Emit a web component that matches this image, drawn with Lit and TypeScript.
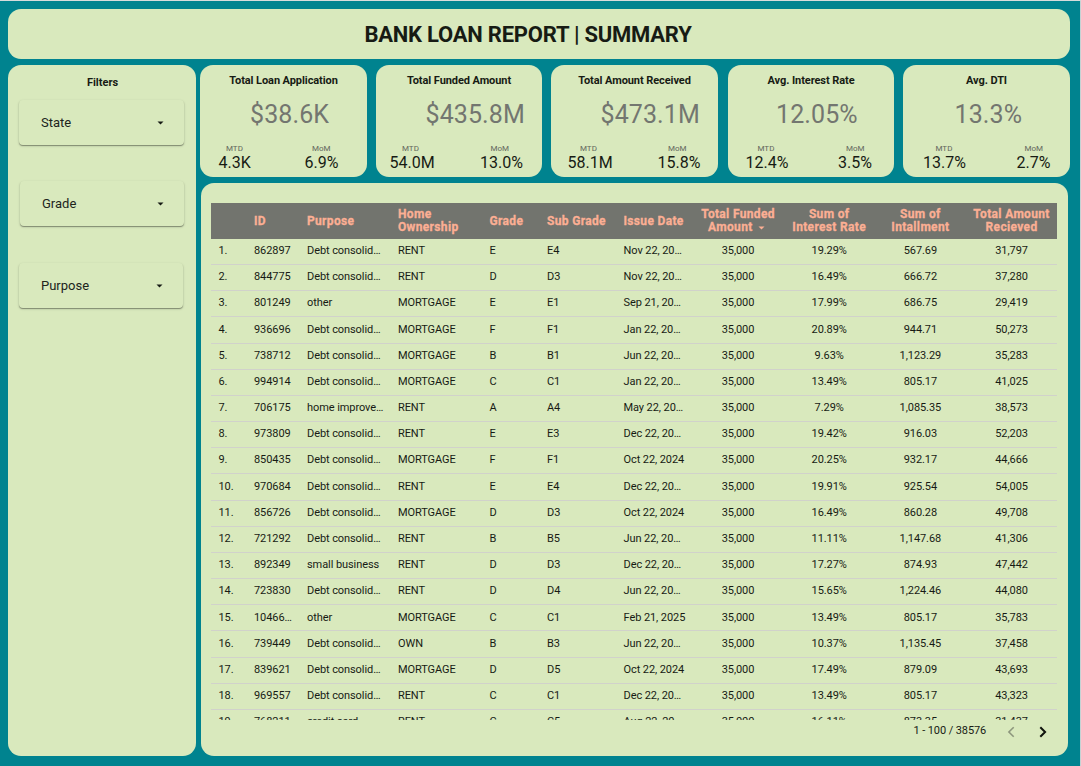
import { LitElement, html, css } from "lit";
import { customElement, property } from "lit/decorators.js";

type Kpi = { key: string; title: string; value: string; mtd: string; mom: string };

const KPIS: Kpi[] = [
  { key: "applications", title: "Total Loan Application", value: "$38.6K", mtd: "4.3K", mom: "6.9%" },
  { key: "funded", title: "Total Funded Amount", value: "$435.8M", mtd: "54.0M", mom: "13.0%" },
  { key: "received", title: "Total Amount Received", value: "$473.1M", mtd: "58.1M", mom: "15.8%" },
  { key: "interest", title: "Avg. Interest Rate", value: "12.05%", mtd: "12.4%", mom: "3.5%" },
  { key: "dti", title: "Avg. DTI", value: "13.3%", mtd: "13.7%", mom: "2.7%" },
];

const ROWS: string[][] = [
  ["862897", "Debt consolid…", "RENT", "E", "E4", "Nov 22, 20…", "35,000", "19.29%", "567.69", "31,797"],
  ["844775", "Debt consolid…", "RENT", "D", "D3", "Nov 22, 20…", "35,000", "16.49%", "666.72", "37,280"],
  ["801249", "other", "MORTGAGE", "E", "E1", "Sep 21, 20…", "35,000", "17.99%", "686.75", "29,419"],
  ["936696", "Debt consolid…", "MORTGAGE", "F", "F1", "Jan 22, 20…", "35,000", "20.89%", "944.71", "50,273"],
  ["738712", "Debt consolid…", "MORTGAGE", "B", "B1", "Jun 22, 20…", "35,000", "9.63%", "1,123.29", "35,283"],
  ["994914", "Debt consolid…", "MORTGAGE", "C", "C1", "Jan 22, 20…", "35,000", "13.49%", "805.17", "41,025"],
  ["706175", "home improve…", "RENT", "A", "A4", "May 22, 20…", "35,000", "7.29%", "1,085.35", "38,573"],
  ["973809", "Debt consolid…", "RENT", "E", "E3", "Dec 22, 20…", "35,000", "19.42%", "916.03", "52,203"],
  ["850435", "Debt consolid…", "MORTGAGE", "F", "F1", "Oct 22, 2024", "35,000", "20.25%", "932.17", "44,666"],
  ["970684", "Debt consolid…", "RENT", "E", "E4", "Dec 22, 20…", "35,000", "19.91%", "925.54", "54,005"],
  ["856726", "Debt consolid…", "MORTGAGE", "D", "D3", "Oct 22, 2024", "35,000", "16.49%", "860.28", "49,708"],
  ["721292", "Debt consolid…", "RENT", "B", "B5", "Jun 22, 20…", "35,000", "11.11%", "1,147.68", "41,306"],
  ["892349", "small business", "RENT", "D", "D3", "Dec 22, 20…", "35,000", "17.27%", "874.93", "47,442"],
  ["723830", "Debt consolid…", "RENT", "D", "D4", "Jun 22, 20…", "35,000", "15.65%", "1,224.46", "44,080"],
  ["10466…", "other", "MORTGAGE", "C", "C1", "Feb 21, 2025", "35,000", "13.49%", "805.17", "35,783"],
  ["739449", "Debt consolid…", "OWN", "B", "B3", "Jun 22, 20…", "35,000", "10.37%", "1,135.45", "37,458"],
  ["839621", "Debt consolid…", "MORTGAGE", "D", "D5", "Oct 22, 2024", "35,000", "17.49%", "879.09", "43,693"],
  ["969557", "Debt consolid…", "RENT", "C", "C1", "Dec 22, 20…", "35,000", "13.49%", "805.17", "43,323"],
  ["768211", "credit card", "RENT", "C", "C5", "Aug 22, 20…", "35,000", "16.11%", "873.35", "31,437"],
];

@customElement("kpi-card")
export class KpiCard extends LitElement {
  @property({ attribute: false }) kpi!: Kpi;

  static styles = css`
    :host { display: block; height: 112px; border-radius: 13px; background: #d9e9bd; color: #171b14; white-space: nowrap; }
    .title { padding-top: 9px; text-align: center; font-size: 11px; line-height: 14px; font-weight: 700; letter-spacing: -0.08px; }
    .value { padding: 12px 0 0 var(--value-x); font-size: 25px; line-height: 30px; color: #737670; letter-spacing: 0.1px; }
    .pair { display: grid; grid-template-columns: var(--split) 1fr; padding: 13px 0 0 var(--mtd-x); }
    .label { font-size: 8px; line-height: 11px; color: #62665c; padding-left: var(--label-x); }
    .label.mom { padding-left: var(--mom-label-x); }
    .num { font-size: 16px; line-height: 17px; }
  `;

  render() {
    const k = this.kpi;
    return html`
      <div class="title">${k.title}</div>
      <div class="value">${k.value}</div>
      <div class="pair">
        <div class="label">MTD</div><div class="label mom">MoM</div>
        <div class="num">${k.mtd}</div><div class="num">${k.mom}</div>
      </div>`;
  }
}

@customElement("filter-select")
export class FilterSelect extends LitElement {
  @property() label = "";

  static styles = css`
    :host {
      display: flex; align-items: center; justify-content: space-between; box-sizing: border-box;
      height: 45px; padding: 0 20px 0 22px; border-radius: 4px; background: #d9e9bd; color: #20241c; font-size: 13px;
      box-shadow: 0 1px 1px rgba(0, 0, 0, 0.34), 0 1px 3px rgba(0, 0, 0, 0.14);
    }
    .arrow { display: block; width: 7px; height: 4px; }
  `;

  render() {
    return html`<span>${this.label}</span>
      <svg class="arrow" viewBox="0 0 7 4"><path d="M.5.5h6l-3 3z" fill="#171b14" /></svg>`;
  }
}

@customElement("loan-table")
export class LoanTable extends LitElement {
  static styles = css`
    :host { display: block; color: #171b14; }
    .row, .head {
      display: grid; align-items: center; white-space: nowrap;
      grid-template-columns: 35.5px 53px 91px 91.5px 57.5px 76.5px 76.4px 91.2px 91.2px 91.2px 91.2px;
    }
    .head { height: 36px; width: 846px; background: #72746e; color: #fcaf94; font-size: 12px; line-height: 13px; font-weight: 700; letter-spacing: 0.33px; -webkit-text-stroke: 0.3px #fcaf94; }
    .body { height: 481px; overflow: hidden; width: 846px; }
    .row { box-sizing: border-box; height: 26.18px; padding-bottom: 0.8px; border-bottom: 1px solid #d1d2cb; font-size: 11px; line-height: 14px; letter-spacing: -0.08px; }
    .row:first-child { margin-top: -0.1px; }
    .c { padding-left: 7.5px; }
    .n { text-align: center; }
    .sort { width: 7px; height: 4px; margin: 0 3px 1px 2px; }
    .pager { display: flex; align-items: center; height: 22px; line-height: 14px; padding-left: 702.5px; font-size: 11px; letter-spacing: -0.1px; }
    .prev, .next { width: 8px; height: 12px; margin-top: 2px; }
    .prev { margin-left: 20.5px; }
    .next { margin-left: 24.5px; }
  `;

  render() {
    return html`
      <div class="head">
        <span></span>
        <span class="c">ID</span><span class="c">Purpose</span><span class="c">Home<br />Ownership</span>
        <span class="c">Grade</span><span class="c">Sub Grade</span><span class="c">Issue Date</span>
        <span class="n">Total Funded<br />Amount <svg class="sort" viewBox="0 0 7 4"><path d="M.5.5h6l-3 3z" fill="#fcaf94" stroke="none" /></svg></span>
        <span class="n">Sum of<br />Interest Rate</span><span class="n">Sum of<br />Intallment</span>
        <span class="n">Total Amount<br />Recieved</span>
      </div>
      <div class="body">
        ${ROWS.map((r, i) => html`<div class="row">
          <span class="c">${i + 1}.</span>${r.map((v, j) => html`<span class=${j < 6 ? "c" : "n"}>${v}</span>`)}
        </div>`)}
      </div>
      <div class="pager">
        <span>1 - 100 / 38576</span>
        <svg class="prev" viewBox="0 0 8 12"><path d="M6.7 1.2 1.9 6l4.8 4.8" fill="none" stroke="#8d967d" stroke-width="1.6" /></svg>
        <svg class="next" viewBox="0 0 8 12"><path d="M1.3 1.2 6.1 6l-4.8 4.8" fill="none" stroke="#11150e" stroke-width="2" /></svg>
      </div>`;
  }
}

@customElement("app-root")
export class AppRoot extends LitElement {
  static styles = css`
    :host {
      display: block; box-sizing: border-box; width: 1081px; height: 766px; overflow: hidden;
      padding: 8px 0 0 8px; border-top: 1px solid #d6dcdc; border-right: 1px solid #c4d3d4;
      background: #00838f; font-family: Roboto, sans-serif;
    }
    .banner {
      width: 1062px; height: 50px; border-radius: 13px; background: #d9e9bd; margin: 0 0 6px;
      display: flex; align-items: center; justify-content: center; box-sizing: border-box; padding-right: 22px;
      font-size: 22px; font-weight: 700; color: #171b14; white-space: nowrap; letter-spacing: -0.24px;
    }
    .layout { display: grid; grid-template-columns: 188px 870px; column-gap: 4px; }
    .side { box-sizing: border-box; height: 691px; border-radius: 13px; background: #d9e9bd; padding: 11px 12px 0 11px; }
    .side-title { text-align: center; font-size: 11px; line-height: 14px; font-weight: 700; color: #171b14; margin: 0 0 10px; padding-left: 2px; }
    .grade { margin: 36px 0 0 1px; }
    .purpose { margin: 37px 1px 0 0; }
    .kpis { display: grid; grid-template-columns: 167px 166px 167px 166px 167px; column-gap: 9px; }
    .applications { --value-x: 50px; --mtd-x: 18.5px; --split: 86px; --label-x: 7.5px; --mom-label-x: 7.5px; }
    .funded { --value-x: 49.5px; --mtd-x: 13.5px; --split: 90.5px; --label-x: 12.5px; --mom-label-x: 10.5px; }
    .received { --value-x: 49.5px; --mtd-x: 16.5px; --split: 90px; --label-x: 12.5px; --mom-label-x: 10.5px; }
    .interest { --value-x: 48px; --mtd-x: 17.5px; --split: 92.5px; --label-x: 12px; --mom-label-x: 8px; margin-left: 1px; margin-right: -1px; }
    .dti { --value-x: 51.5px; --mtd-x: 20px; --split: 93.5px; --label-x: 12.5px; --mom-label-x: 8px; margin-left: 1px; margin-right: -1px; }
    .panel { box-sizing: border-box; width: 867px; height: 573px; margin: 6px 0 0 1px; padding: 20px 10px 0; border-radius: 13px; background: #d9e9bd; }
  `;

  render() {
    return html`
      <div class="banner">BANK LOAN REPORT | SUMMARY</div>
      <div class="layout">
        <div class="side">
          <div class="side-title">Filters</div>
          <filter-select class="state" label="State"></filter-select>
          <filter-select class="grade" label="Grade"></filter-select>
          <filter-select class="purpose" label="Purpose"></filter-select>
        </div>
        <div>
          <div class="kpis">${KPIS.map((k) => html`<kpi-card class=${k.key} .kpi=${k}></kpi-card>`)}</div>
          <div class="panel"><loan-table></loan-table></div>
        </div>
      </div>`;
  }
}
